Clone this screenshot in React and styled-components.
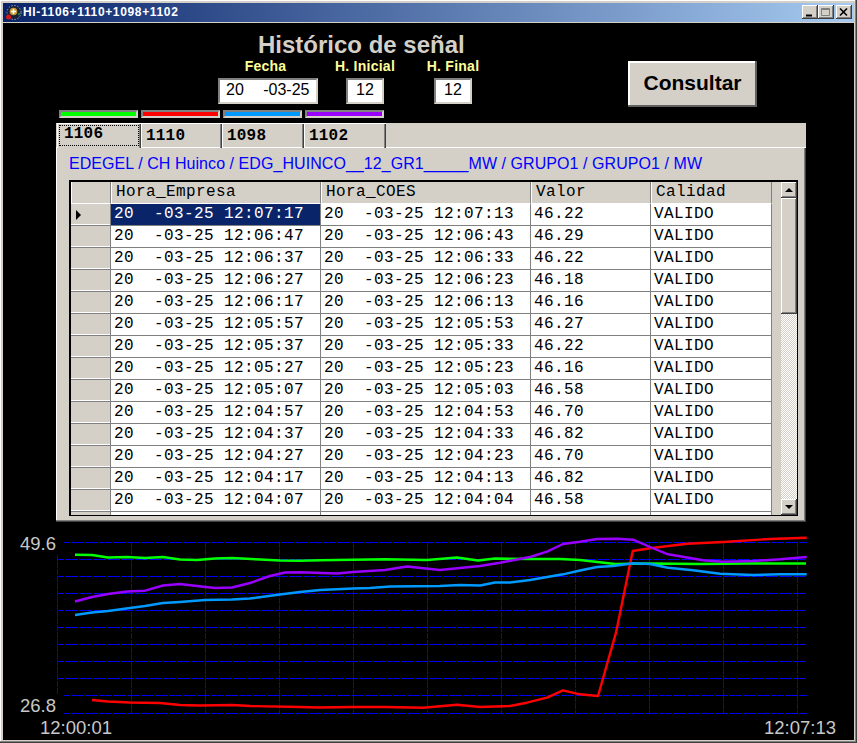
import React from "react";
import styled, { createGlobalStyle } from "styled-components";

const GlobalStyle = createGlobalStyle`
  html, body { margin: 0; padding: 0; background: #d4d0c8; overflow: hidden; }
  * { box-sizing: border-box; }
`;

const FACE = "#d4d0c8";
const MONO = `"Liberation Mono", "Courier New", monospace`;
const SANS = `"Liberation Sans", Arial, sans-serif`;

const Window = styled.div`
  width: 857px;
  height: 743px;
  padding: 3px 3px 4px 3px;
  background: ${FACE};
  box-shadow: inset -1px -1px 0 #404040, inset -2px -2px 0 #808080, inset 1px 1px 0 #fff;
  display: flex;
  flex-direction: column;
`;

const TitleBar = styled.div`
  height: 19px;
  flex: none;
  display: flex;
  align-items: center;
  padding: 0 2px 1px 2px;
  background: linear-gradient(90deg, #0a246a, #a6caf0);
`;

const TitleText = styled.div`
  flex: 1;
  margin-left: 1px;
  font: bold 12px "Liberation Sans", Arial, sans-serif;
  letter-spacing: 0.65px;
  color: #fff;
  white-space: nowrap;
`;

const WinButton = styled.div`
  width: 16px;
  height: 14px;
  margin-left: ${p => p.$gap || 0}px;
  background: ${FACE};
  box-shadow: inset -1px -1px 0 #404040, inset 1px 1px 0 #fff, inset -2px -2px 0 #808080;
  display: flex;
  align-items: center;
  justify-content: center;
`;

const Client = styled.div`
  margin-top: 1px;
  flex: 1;
  background: #000;
  display: flex;
  flex-direction: column;
`;

const Header = styled.div`
  height: 100px;
  flex: none;
  padding-left: 56px;
  display: grid;
  grid-template-columns: 569px 129px;
`;

const HeaderLeft = styled.div`
  display: flex;
  flex-direction: column;
`;

const Title = styled.div`
  height: 33px;
  padding: 10px 0 0 199px;
  font: bold 24px/24px ${SANS};
  color: ${FACE};
  white-space: nowrap;
`;

const Fields = styled.div`
  display: flex;
  padding-left: 159px;
  height: 54px;
`;

const Field = styled.div`
  width: ${p => p.$w}px;
  margin-left: ${p => p.$gap || 0}px;
  display: flex;
  flex-direction: column;
  align-items: center;
`;

const FieldLabel = styled.div`
  height: 22px;
  padding-top: 3px;
  margin-left: ${p => p.$shift || 0}px;
  font: bold 14px/15px ${SANS};
  letter-spacing: 0.25px;
  color: #ffff99;
  white-space: nowrap;
`;

const FieldBox = styled.div`
  width: 100%;
  height: 26px;
  background: #fff;
  border: 2px solid;
  border-color: #808080 ${FACE} ${FACE} #808080;
  font: 16px/20px ${SANS};
  word-spacing: 0.4px;
  color: #000;
  white-space: pre;
  text-align: ${p => (p.$center ? "center" : "left")};
  padding-left: ${p => (p.$center ? 0 : 6)}px;
`;

const Legend = styled.div`
  display: flex;
  gap: 3px;
`;

const Swatch = styled.div`
  width: 79px;
  height: 8px;
  background: ${p => p.$color};
  border: 2px solid;
  border-color: #808080 ${FACE} ${FACE} #808080;
`;

const QueryButton = styled.button`
  margin-top: 38px;
  width: 129px;
  height: 46px;
  padding: 0 0 3px 0;
  border: none;
  background: ${FACE};
  box-shadow: inset -2px -2px 0 #606060, inset 2px 2px 0 #fff;
  font: bold 21px ${SANS};
  color: #000;
`;

const TabPanel = styled.div`
  width: 750px;
  height: 399px;
  flex: none;
  margin-left: 53px;
  display: flex;
  flex-direction: column;
  background: ${FACE};
`;

const TabStrip = styled.div`
  height: 25px;
  flex: none;
  display: flex;
  padding-left: 1px;
  box-shadow: inset 0 -1px 0 #fff;
`;

const Tab = styled.div`
  width: ${p => p.$w}px;
  height: 25px;
  padding: ${p => (p.$active ? "2px" : "3px 0 0 5px")};
  background: ${FACE};
  box-shadow: inset 1px 1px 0 #fff, inset -1px 0 0 #404040, inset -2px 0 0 #808080
    ${p => (p.$active ? "" : ", inset 0 -1px 0 #fff")};
  font: bold 16px/20px ${MONO};
  letter-spacing: 0.2px;
  color: #000;
`;

const TabFocus = styled.div`
  height: 21px;
  padding-left: 4px;
  line-height: 17px;
  border: 1px dotted #000;
`;

const TabBody = styled.div`
  flex: 1;
  padding: 0 8px 0 13px;
  box-shadow: inset -1px -1px 0 #404040, inset -2px -2px 0 #808080, inset 1px 0 0 #fff;
`;

const PathLabel = styled.div`
  height: 32px;
  font: 16px/32px ${SANS};
  letter-spacing: 0.06px;
  color: #0000ff;
  white-space: pre;
`;

const GridFrame = styled.div`
  width: 729px;
  height: 336px;
  border-style: solid;
  border-width: 2px 1px 1px 2px;
  border-color: #000;
  display: flex;
  overflow: hidden;
`;

const GridTable = styled.div`
  width: 701px;
  flex: none;
`;

const Row = styled.div`
  display: grid;
  grid-template-columns: 40px 210px 210px 120px 121px;
  height: 22px;
`;

const HeadCell = styled.div`
  padding: 0 0 0 5px;
  font: 16px/20px ${MONO};
  letter-spacing: 0.4px;
  color: #000;
  border-right: 1px solid #808080;
  border-bottom: 1px solid #fff;
  box-shadow: inset 1px 0 0 #fff;
  white-space: pre;
`;

const StubCell = styled.div`
  background: ${FACE};
  border-right: 1px solid #808080;
  border-bottom: 1px solid #808080;
  box-shadow: inset 0 -1px 0 #fff;
  display: flex;
  align-items: center;
  padding-left: 5px;
`;

const RowMarker = styled.span`
  width: 0;
  height: 0;
  border-left: 5px solid #000;
  border-top: 5px solid transparent;
  border-bottom: 5px solid transparent;
`;

const DataCell = styled.div`
  padding-left: 3px;
  font: 16px/21px ${MONO};
  letter-spacing: 0.4px;
  background: ${p => (p.$selected ? "#0a246a" : "#fff")};
  color: ${p => (p.$selected ? "#fff" : "#000")};
  border-right: 1px solid #808080;
  border-bottom: 1px solid #808080;
  white-space: pre;
`;

const ScrollBar = styled.div`
  width: 16px;
  margin-left: 9px;
  flex: none;
  display: flex;
  flex-direction: column;
  background: repeating-conic-gradient(#fff 0 25%, ${FACE} 0 50%) 0 0 / 2px 2px;
`;

const ScrollButton = styled.div`
  height: 16px;
  flex: none;
  background: ${FACE};
  box-shadow: inset -1px -1px 0 #404040, inset 1px 1px 0 #fff, inset -2px -2px 0 #808080;
  display: flex;
  align-items: center;
  justify-content: center;
`;

const ScrollThumb = styled.div`
  height: 116px;
  flex: none;
  background: ${FACE};
  box-shadow: inset -1px -1px 0 #404040, inset 1px 1px 0 #fff, inset -2px -2px 0 #808080;
`;

const ScrollSpace = styled.div`
  flex: 1;
`;

const Arrow = styled.span`
  width: 0;
  height: 0;
  border-left: 4px solid transparent;
  border-right: 4px solid transparent;
  ${p => (p.$up ? "border-bottom: 4px solid #000;" : "border-top: 4px solid #000;")}
`;

const ChartSvg = styled.svg`
  display: block;
  flex: none;
`;

const AxisText = styled.text`
  font: 18.5px ${SANS};
  fill: #c8c8c8;
`;

const rows = [
  ["12:07:17", "12:07:13", "46.22"],
  ["12:06:47", "12:06:43", "46.29"],
  ["12:06:37", "12:06:33", "46.22"],
  ["12:06:27", "12:06:23", "46.18"],
  ["12:06:17", "12:06:13", "46.16"],
  ["12:05:57", "12:05:53", "46.27"],
  ["12:05:37", "12:05:33", "46.22"],
  ["12:05:27", "12:05:23", "46.16"],
  ["12:05:07", "12:05:03", "46.58"],
  ["12:04:57", "12:04:53", "46.70"],
  ["12:04:37", "12:04:33", "46.82"],
  ["12:04:27", "12:04:23", "46.70"],
  ["12:04:17", "12:04:13", "46.82"],
  ["12:04:07", "12:04:04", "46.58"]
];

const hLines = [541, 558, 575, 592, 609, 626, 643, 660, 677, 694, 712];
const vLines = [131, 205, 279, 353, 427, 501, 575, 649, 723, 797];

const series = [
  {
    color: "#00ff00",
    points:
      "75,553.7 92,554 108,556.5 127,556 145,557 163,556 180,558.5 197,559 215,557.5 232,557 260,558.5 280,559.5 300,559.7 320,559.3 353,558.7 385,558.3 427,559 457,556.5 478,559.5 495,557.5 530,558 560,558 580,559 615,563 650,562.5 700,563 750,562.5 806,562.5"
  },
  {
    color: "#ff0000",
    points:
      "92,699 108,700.5 130,701.5 160,702 180,704 200,704.5 232,704 250,705 300,706 318,706.5 353,706 385,706 423,706.7 457,703.7 480,706 510,705 527,701.7 547,696.7 563,689.3 580,693.3 598,695 616,631.7 632.7,550 650,547.3 687,542.7 723,541 770,538 806.7,536.7"
  },
  {
    color: "#0099ff",
    points:
      "75,614 92,611.5 108,610 130,607 145,605 163,602 180,601 205,599 232,598.5 250,597.5 265,595.5 280,593.5 300,591 320,589 353,587.5 370,587 390,585.5 440,585 460,584 480,584.5 495,581.5 510,581.5 530,579 563,573.3 580,569.5 597,566 613,565 633,562.3 650,563 668,566.7 693,569.3 720,572.7 753,574 780,573.3 806.7,573.3"
  },
  {
    color: "#9900ff",
    points:
      "75,600.5 92,596 108,593 127,590.5 145,589.7 163,584.5 180,583 197,585 215,587 232,586.5 250,582 270,575 285,571.5 300,571.3 337,572.5 353,571 385,569 407,565.5 440,569 480,565 500,561.7 530,556 547,550.7 563,543 580,540.7 597,538 617,537.7 633,538.7 650,546 668,553.3 703,559.3 723,560.7 753,560 780,558.3 806.7,556"
  }
];

const Chart = () => (
  <ChartSvg width="851" height="218" viewBox="3 521 851 218">
    <g stroke="#0000ff" strokeDasharray="6 1" shapeRendering="crispEdges">
      {hLines.map(y => (
        <line key={y} x1={y === 541 || y >= 694 ? 64 : 58} x2="807" y1={y + 0.5} y2={y + 0.5} />
      ))}
      <line x1="57.5" x2="57.5" y1="554" y2="693" />
      {vLines.map(x => (
        <line key={x} x1={x + 0.5} x2={x + 0.5} y1="541" y2="712" />
      ))}
    </g>
    {series.map(s => (
      <polyline key={s.color} points={s.points} fill="none" stroke={s.color} strokeWidth="2.4" strokeLinejoin="round" />
    ))}
    <AxisText x="20" y="549">49.6</AxisText>
    <AxisText x="20" y="711">26.8</AxisText>
    <AxisText x="40" y="733">12:00:01</AxisText>
    <AxisText x="764" y="733">12:07:13</AxisText>
  </ChartSvg>
);

const AppIcon = () => (
  <svg width="17" height="17" viewBox="0 0 17 17">
    <circle cx="9" cy="8.5" r="7" fill="#1a2038" stroke="#9aa0b8" strokeDasharray="1.5 1.5" />
    <circle cx="8.5" cy="7.5" r="3.8" fill="#c89838" />
    <path d="M8.5 5v5M6 7.5h5" stroke="#fff" strokeWidth="1.4" />
    <circle cx="3.5" cy="13" r="2.5" fill="#d81818" />
    <circle cx="14" cy="10" r="1.3" fill="#108030" />
  </svg>
);

const App = () => (
  <Window>
    <GlobalStyle />
    <TitleBar>
      <AppIcon />
      <TitleText>HI-1106+1110+1098+1102</TitleText>
      <WinButton>
        <svg width="10" height="9" viewBox="0 0 10 9"><path d="M1 7.5h6" stroke="#000" strokeWidth="2" /></svg>
      </WinButton>
      <WinButton>
        <svg width="10" height="9" viewBox="0 0 10 9"><path d="M.5.5h8v7h-8zM.5 1.5h8" fill="none" stroke="#808080" /></svg>
      </WinButton>
      <WinButton $gap={2}>
        <svg width="10" height="9" viewBox="0 0 10 9"><path d="M1 .5l7 7M8 .5l-7 7" stroke="#000" strokeWidth="1.6" /></svg>
      </WinButton>
    </TitleBar>
    <Client>
      <Header>
        <HeaderLeft>
          <Title>Histórico de señal</Title>
          <Fields>
            <Field $w={100}>
              <FieldLabel $shift={-5}>Fecha</FieldLabel>
              <FieldBox>{"20    -03-25"}</FieldBox>
            </Field>
            <Field $w={38} $gap={28}>
              <FieldLabel>H. Inicial</FieldLabel>
              <FieldBox $center>12</FieldBox>
            </Field>
            <Field $w={38} $gap={50}>
              <FieldLabel>H. Final</FieldLabel>
              <FieldBox $center>12</FieldBox>
            </Field>
          </Fields>
          <Legend>
            <Swatch $color="#00ff00" />
            <Swatch $color="#ff0000" />
            <Swatch $color="#0099ff" />
            <Swatch $color="#9900ff" />
          </Legend>
        </HeaderLeft>
        <QueryButton type="button">Consultar</QueryButton>
      </Header>
      <TabPanel>
        <TabStrip>
          <Tab $w={84} $active><TabFocus>1106</TabFocus></Tab>
          <Tab $w={81}>1110</Tab>
          <Tab $w={82}>1098</Tab>
          <Tab $w={82}>1102</Tab>
        </TabStrip>
        <TabBody>
          <PathLabel>EDEGEL / CH Huinco / EDG_HUINCO__12_GR1_____MW / GRUPO1 / GRUPO1 / MW</PathLabel>
          <GridFrame>
            <GridTable>
              <Row>
                <HeadCell />
                <HeadCell>Hora_Empresa</HeadCell>
                <HeadCell>Hora_COES</HeadCell>
                <HeadCell>Valor</HeadCell>
                <HeadCell>Calidad</HeadCell>
              </Row>
              {rows.map(([empresa, coes, valor], i) => (
                <Row key={empresa}>
                  <StubCell>{i === 0 && <RowMarker />}</StubCell>
                  <DataCell $selected={i === 0}>{`20  -03-25 ${empresa}`}</DataCell>
                  <DataCell>{`20  -03-25 ${coes}`}</DataCell>
                  <DataCell>{valor}</DataCell>
                  <DataCell>VALIDO</DataCell>
                </Row>
              ))}
              <Row>
                <StubCell />
                <DataCell />
                <DataCell />
                <DataCell />
                <DataCell />
              </Row>
            </GridTable>
            <ScrollBar>
              <ScrollButton><Arrow $up /></ScrollButton>
              <ScrollThumb />
              <ScrollSpace />
              <ScrollButton><Arrow /></ScrollButton>
            </ScrollBar>
          </GridFrame>
        </TabBody>
      </TabPanel>
      <Chart />
    </Client>
  </Window>
);

export default App;
